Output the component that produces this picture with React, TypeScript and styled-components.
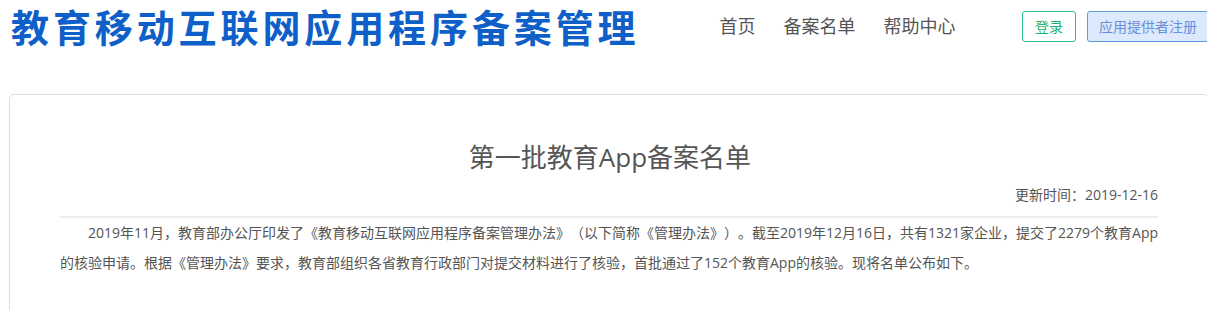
import React from 'react';
import styled, {createGlobalStyle} from 'styled-components';

const GlobalStyle=createGlobalStyle`
    html, body {
        margin: 0;
        padding: 0;
        background: #fff;
        overflow: hidden;
    }
    body {
        font-family: "Open Sans", "Noto Sans CJK SC", sans-serif;
        color: #555;
        text-spacing-trim: space-all;
    }
`;

const Page=styled.div`
    width: 1200px;
    margin-left: 9px;
`;

const Header=styled.header`
    display: flex;
    flex-direction: row;
    align-items: center;
    height: 52px;
`;

const Logo=styled.h1`
    margin: 0 0 0 2px;
    font-family: "Noto Sans CJK SC", sans-serif;
    font-size: 38px;
    font-weight: 700;
    letter-spacing: 3.9px;
    line-height: 52px;
    color: #0f5fc8;
    white-space: nowrap;
`;

const Nav=styled.nav`
    display: flex;
    flex-direction: row;
    gap: 28px;
    margin-left: 80px;
`;

const NavLink=styled.a`
    font-size: 18px;
    color: #555;
    text-decoration: none;
    line-height: 24px;
    white-space: nowrap;
`;

const Actions=styled.div`
    display: flex;
    flex-direction: row;
    gap: 11px;
    margin-left: auto;
`;

const Button=styled.a<{$kind:'login'|'register'}>`
    display: inline-flex;
    align-items: center;
    height: 31px;
    padding: 0 ${p=>p.$kind==='login'?12:11}px;
    box-sizing: border-box;
    font-size: 14px;
    border-radius: 3px;
    white-space: nowrap;
    text-decoration: none;
    border: 1px solid ${p=>p.$kind==='login'?'#2dbd8a':'#5b9be0'};
    color: ${p=>p.$kind==='login'?'#1ab370':'#6a8fd8'};
    background: ${p=>p.$kind==='login'?'#fff':'#dde9fc'};
`;

const Card=styled.section`
    margin-top: 42px;
    border: 1px solid #ddd;
    border-radius: 5px;
    padding: 0 48px 0 50px;
    height: 260px;
    box-sizing: border-box;
`;

const Title=styled.h2`
    margin: 44px 0 0;
    text-align: center;
    font-size: 26px;
    font-weight: 400;
    line-height: 36px;
    color: #555;
`;

const UpdateTime=styled.div`
    margin-top: 10px;
    margin-right: 2px;
    text-align: right;
    font-size: 14px;
    line-height: 20px;
    color: #555;
`;

const Divider=styled.hr`
    margin: 11px 2px 0 0;
    border: none;
    height: 2px;
    background: #eee;
`;

const Paragraph=styled.p`
    margin: 0;
    font-size: 14px;
    line-height: 30px;
    text-indent: 2em;
    color: #555;
`;

export default function App(){
    return (
        <Page>
            <GlobalStyle/>
            <Header>
                <Logo>教育移动互联网应用程序备案管理</Logo>
                <Nav>
                    <NavLink href="#">首页</NavLink>
                    <NavLink href="#">备案名单</NavLink>
                    <NavLink href="#">帮助中心</NavLink>
                </Nav>
                <Actions>
                    <Button $kind="login" href="#">登录</Button>
                    <Button $kind="register" href="#">应用提供者注册</Button>
                </Actions>
            </Header>
            <Card>
                <Title>第一批教育App备案名单</Title>
                <UpdateTime>更新时间：2019-12-16</UpdateTime>
                <Divider/>
                <Paragraph>
                    2019年11月，教育部办公厅印发了《教育移动互联网应用程序备案管理办法》（以下简称《管理办法》）。截至2019年12月16日，共有1321家企业，提交了2279个教育App的核验申请。根据《管理办法》要求，教育部组织各省教育行政部门对提交材料进行了核验，首批通过了152个教育App的核验。现将名单公布如下。
                </Paragraph>
            </Card>
        </Page>
    );
}
